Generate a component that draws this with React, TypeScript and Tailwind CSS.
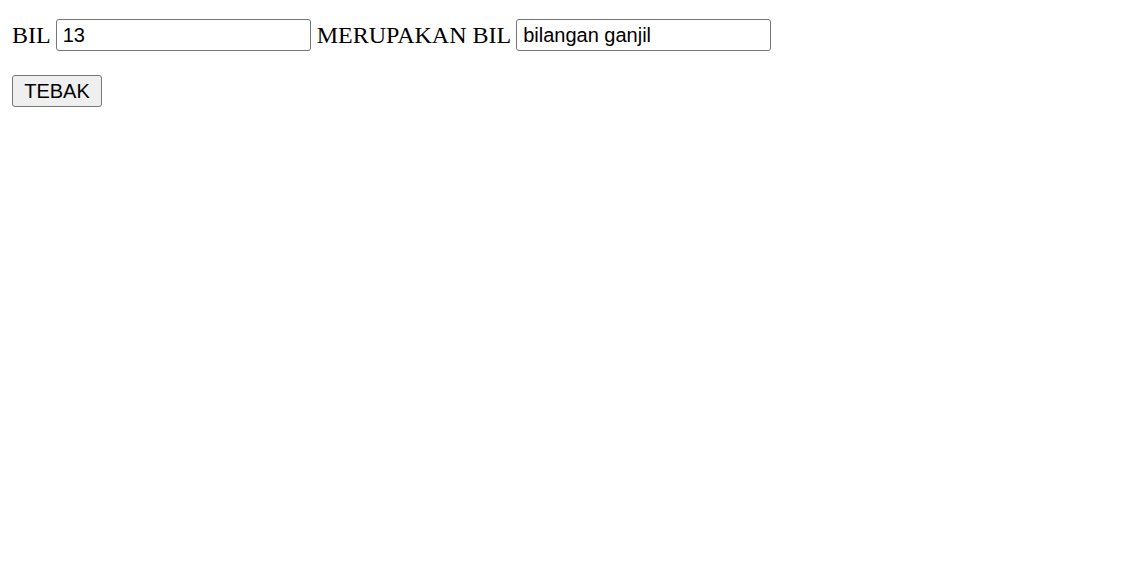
export default function App() {
  return (
    <div className="min-h-[581px] bg-white p-[12px] text-black font-['Liberation_Serif',serif] text-[24px]">
      <div className="mt-[7px] flex items-center leading-[32px]">
        <span className="mr-[5px]">BIL</span>
        <input
          type="text"
          defaultValue="13"
          className="h-[32px] w-[255px] rounded-[3px] border border-[#767676] px-[6px] font-['Liberation_Sans',sans-serif] text-[20px] text-black outline-none"
        />
        <span className="ml-[6px] mr-[5px]">MERUPAKAN BIL</span>
        <input
          type="text"
          defaultValue="bilangan ganjil"
          className="h-[32px] w-[255px] rounded-[3px] border border-[#767676] px-[6px] font-['Liberation_Sans',sans-serif] text-[20px] text-black outline-none"
        />
      </div>
      <div className="mt-[24px] flex">
        <button className="h-[32px] w-[90px] rounded-[3px] border border-[#767676] bg-[#efefef] font-['Liberation_Sans',sans-serif] text-[20px] text-black">
          TEBAK
        </button>
      </div>
    </div>
  );
}
